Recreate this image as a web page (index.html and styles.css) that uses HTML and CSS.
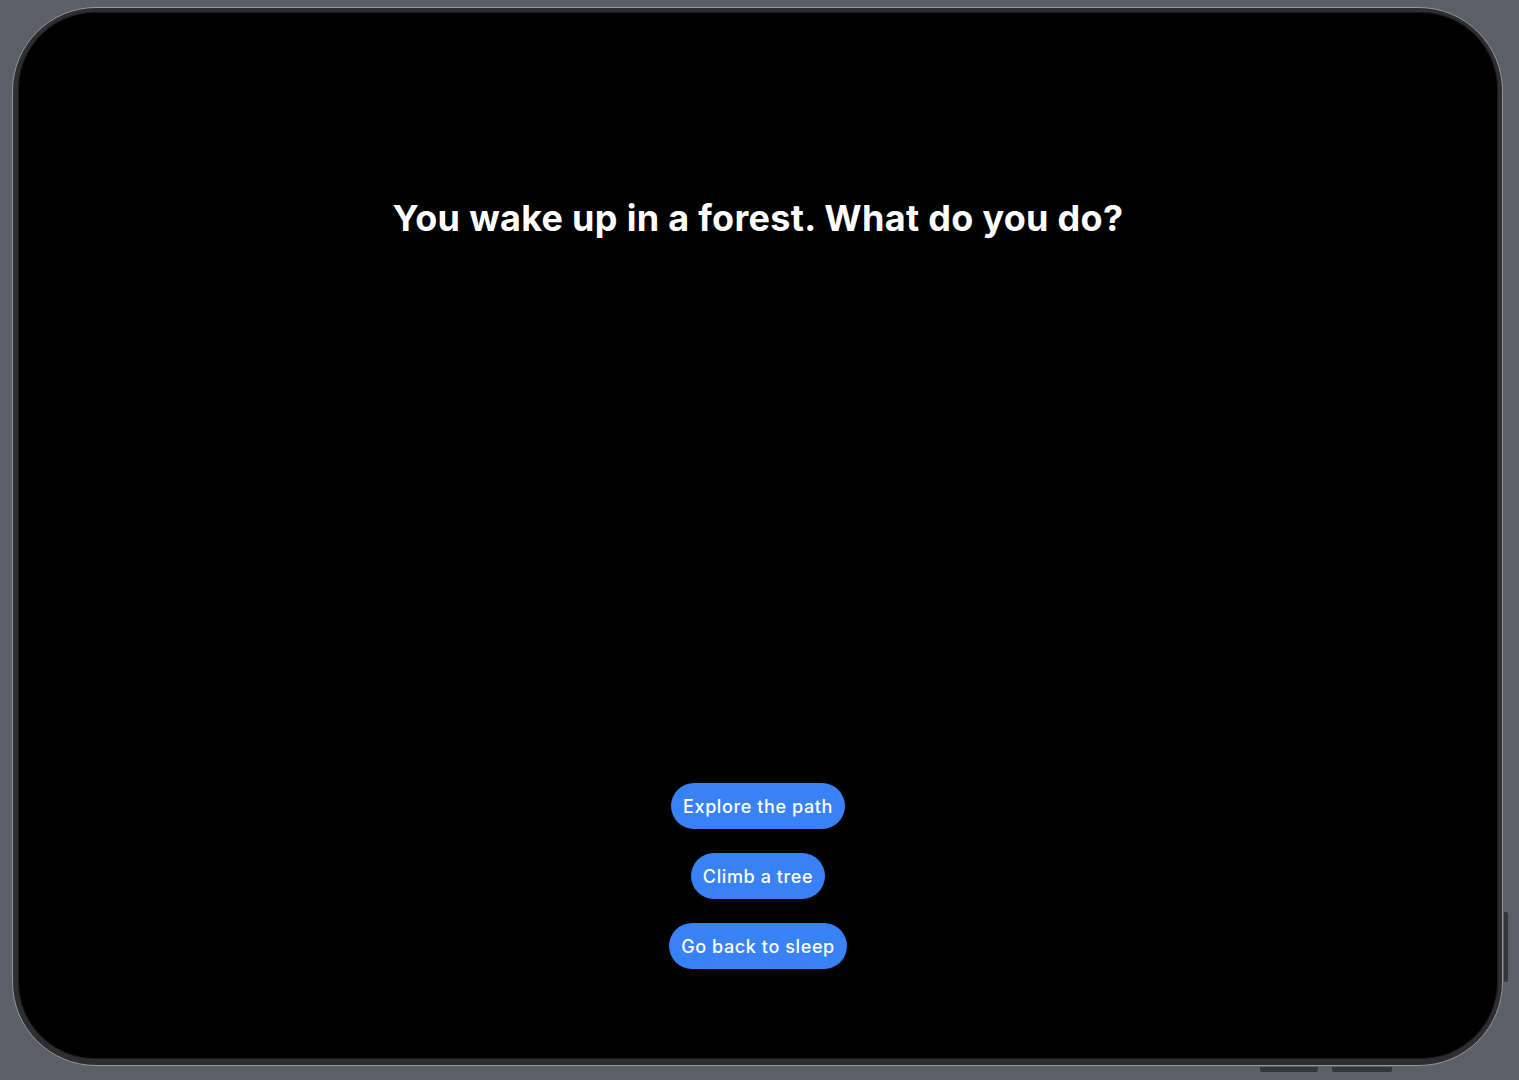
FILE: index.html
```html
<!DOCTYPE html>
<html lang="en">
<head>
<meta charset="utf-8">
<title>Forest</title>
<link rel="stylesheet" href="styles.css">
</head>
<body>
  <div class="device">
    <div class="side-button"></div>
    <div class="vol-button vol-1"></div>
    <div class="vol-button vol-2"></div>
    <main class="screen">
      <h1 class="question">You wake up in a forest. What do you do?</h1>
      <div class="choices">
        <button class="choice">Explore the path</button>
        <button class="choice">Climb a tree</button>
        <button class="choice">Go back to sleep</button>
      </div>
    </main>
  </div>
</body>
</html>
```
FILE: styles.css
```css
html, body {
  margin: 0;
  padding: 0;
  background: #5b6068;
  height: 1080px;
  overflow: hidden;
}
body {
  padding: 7px 0 0 12px;
  box-sizing: border-box;
  font-family: Inter, "Noto Sans", "Liberation Sans", sans-serif;
}
.device {
  position: relative;
  width: 1491px;
  height: 1059px;
  box-sizing: border-box;
  border: 1px solid #93969b;
  border-radius: 84px;
  background: #2e2e30;
  padding: 5px 5px 6px 6px;
}
.screen {
  width: 1478px;
  height: 1045px;
  background: #000;
  border-radius: 76px;
  display: flex;
  flex-direction: column;
  align-items: center;
  justify-content: space-between;
  box-sizing: border-box;
  padding: 183px 0 89px;
  box-shadow: 0 0 0 1px #1a1a1b;
}
.question {
  margin: 0;
  color: #fff;
  font-size: 36px;
  line-height: 44px;
  font-weight: 700;
  letter-spacing: 0.3px;
}
.choices {
  display: flex;
  flex-direction: column;
  align-items: center;
  gap: 24px;
}
.choice {
  height: 46px;
  border: none;
  border-radius: 23px;
  background: #3882f6;
  color: #fff;
  font-family: Inter, "Noto Sans", "Liberation Sans", sans-serif;
  font-size: 18px;
  font-weight: 500;
  padding: 0 12px;
  letter-spacing: 0.6px;
}
.side-button {
  position: absolute;
  right: -6px;
  top: 904px;
  width: 4px;
  height: 70px;
  background: #34363a;
  border-radius: 0 2px 2px 0;
}
.vol-button {
  position: absolute;
  bottom: -7px;
  height: 5px;
  background: #34363a;
  border-radius: 0 0 2px 2px;
}
.vol-1 { left: 1247px; width: 58px; }
.vol-2 { left: 1319px; width: 60px; }
```
